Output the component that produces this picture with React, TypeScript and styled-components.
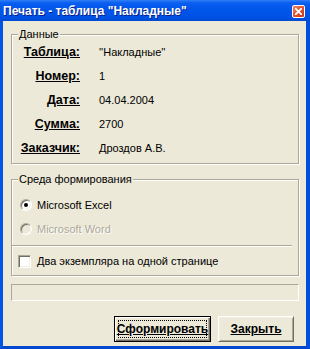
import styled, { createGlobalStyle } from "styled-components";

const GlobalStyle = createGlobalStyle`
    html, body {
        margin: 0;
        padding: 0;
        background: #ece9d8;
    }
    body {
        font-family: "Liberation Sans", Arial, sans-serif;
        font-size: 11px;
        color: #000;
    }
`;

const rows = [
    { label: "Таблица:", value: "''Накладные''" },
    { label: "Номер:", value: "1" },
    { label: "Дата:", value: "04.04.2004" },
    { label: "Сумма:", value: "2700" },
    { label: "Заказчик:", value: "Дроздов А.В." },
];

function CloseIcon() {
    return (
        <svg width="7" height="7" viewBox="0 0 7 7">
            <path d="M0.5 0.5 L6.5 6.5 M6.5 0.5 L0.5 6.5" stroke="#fff" strokeWidth="1.8" strokeLinecap="square" />
        </svg>
    );
}

export default function App() {
    return (
        <>
            <GlobalStyle />
            <Window>
                <TitleBar>
                    <Title>Печать - таблица "Накладные"</Title>
                    <CloseButton>
                        <CloseIcon />
                    </CloseButton>
                </TitleBar>
                <Body>
                    <Group $padTop={5} $padBottom={3}>
                        <Legend>Данные</Legend>
                        <InfoGrid>
                            {rows.map((r) => (
                                <InfoRow key={r.label}>
                                    <Label>{r.label}</Label>
                                    <Value>{r.value}</Value>
                                </InfoRow>
                            ))}
                        </InfoGrid>
                    </Group>

                    <Group $padTop={13} $padBottom={2} $gap={15}>
                        <Legend>Среда формирования</Legend>
                        <OptionRow $pad={8}>
                            <Radio $checked />
                            <OptionText>Microsoft Excel</OptionText>
                        </OptionRow>
                        <OptionRow $pad={8}>
                            <Radio $disabled />
                            <OptionText $disabled>Microsoft Word</OptionText>
                        </OptionRow>
                        <Separator />
                        <OptionRow $pad={6}>
                            <Checkbox />
                            <OptionText>Два экземпляра на одной странице</OptionText>
                        </OptionRow>
                    </Group>

                    <StatusField />

                    <Buttons>
                        <Button $default>Сформировать</Button>
                        <Button>Закрыть</Button>
                    </Buttons>
                </Body>
            </Window>
        </>
    );
}

const Window = styled.div`
    width: 310px;
    height: 349px;
    display: flex;
    flex-direction: column;
    box-sizing: border-box;
    background: #0054e3;
`;

const TitleBar = styled.div`
    height: 21px;
    flex: none;
    display: flex;
    align-items: center;
    justify-content: space-between;
    padding: 1px 5px 0 3px;
    box-sizing: border-box;
    background: linear-gradient(#2f7df5 0px, #0a5ef0 3px, #0055ea 10px, #0052e4 18px, #0048d0 21px);
`;

const Title = styled.span`
    color: #fff;
    font-family: "Liberation Sans", Arial, sans-serif;
    font-weight: bold;
    font-size: 12px;
    text-shadow: 1px 1px #0a1f8c;
    white-space: nowrap;
`;

const CloseButton = styled.div`
    width: 13px;
    height: 13px;
    box-sizing: border-box;
    border: 1px solid #fff;
    border-radius: 2px;
    background: linear-gradient(135deg, #f08a6c, #e0502e 50%, #c63a1a);
    display: flex;
    align-items: center;
    justify-content: center;
`;

const Body = styled.div`
    flex: 1;
    display: flex;
    flex-direction: column;
    background: #ece9d8;
    border-left: 3px solid #0055e5;
    border-right: 4px solid #0050dc;
    border-bottom: 3px solid #0048cf;
    padding: 13px 7px 3px 8px;
`;

const Group = styled.div<{ $padTop: number; $padBottom: number; $gap?: number }>`
    position: relative;
    border: 1px solid #aca899;
    box-shadow: inset 1px 1px #fff, 1px 1px #fff;
    padding: ${(p) => p.$padTop}px 0 ${(p) => p.$padBottom}px 0;
    margin-top: ${(p) => p.$gap ?? 0}px;
`;

const Legend = styled.span`
    position: absolute;
    top: -7px;
    left: 6px;
    padding: 0 1px;
    line-height: 13px;
    background: #ece9d8;
`;

const InfoGrid = styled.div`
    display: flex;
    flex-direction: column;
`;

const InfoRow = styled.div`
    height: 24px;
    display: grid;
    grid-template-columns: 68px 1fr;
    column-gap: 19px;
    align-items: center;
`;

const Label = styled.span`
    text-align: right;
    font-weight: bold;
    font-size: 12.5px;
    text-decoration: underline;
    white-space: nowrap;
`;

const Value = styled.span`
    font-size: 11px;
`;

const OptionRow = styled.div<{ $pad: number }>`
    height: 24px;
    display: flex;
    align-items: center;
    padding-left: ${(p) => p.$pad}px;
`;

const Radio = styled.span<{ $checked?: boolean; $disabled?: boolean }>`
    width: 12px;
    height: 12px;
    box-sizing: border-box;
    border-radius: 50%;
    border: 1px solid;
    border-color: #aca899 #fff #fff #aca899;
    box-shadow: inset 1px 1px #716f64, inset -1px -1px #f1efe2;
    background: ${(p) => (p.$disabled ? "#ece9d8" : "#fff")};
    display: flex;
    align-items: center;
    justify-content: center;
    margin-right: 5px;
    &::after {
        content: "";
        width: 4px;
        height: 4px;
        border-radius: 50%;
        background: ${(p) => (p.$checked ? "#000" : "transparent")};
    }
`;

const Checkbox = styled.span`
    width: 13px;
    height: 13px;
    box-sizing: border-box;
    border: 1px solid;
    border-color: #aca899 #fff #fff #aca899;
    box-shadow: inset 1px 1px #716f64, inset -1px -1px #f1efe2;
    background: #fff;
    margin-right: 6px;
`;

const OptionText = styled.span<{ $disabled?: boolean }>`
    color: ${(p) => (p.$disabled ? "#aca899" : "#000")};
    text-shadow: ${(p) => (p.$disabled ? "1px 1px #fff" : "none")};
`;

const Separator = styled.div`
    height: 1px;
    margin: 4px 6px 3px 0;
    background: #aca899;
    box-shadow: 0 1px #fff;
`;

const StatusField = styled.div`
    height: 17px;
    box-sizing: border-box;
    margin-top: 8px;
    border: 1px solid;
    border-color: #aca899 #fff #fff #aca899;
`;

const Buttons = styled.div`
    margin-top: 15px;
    margin-right: 5px;
    display: flex;
    justify-content: flex-end;
    gap: 7px;
`;

const Button = styled.button<{ $default?: boolean }>`
    height: 26px;
    width: ${(p) => (p.$default ? 97 : 76)}px;
    box-sizing: border-box;
    padding: 0;
    font-family: "Liberation Sans", Arial, sans-serif;
    font-weight: bold;
    font-size: 12px;
    text-decoration: underline;
    color: #000;
    background: #ece9d8;
    border: 1px solid;
    border-color: ${(p) => (p.$default ? "#000" : "#fff #716f64 #716f64 #fff")};
    box-shadow: ${(p) =>
        p.$default
            ? "inset 1px 1px #fff, inset -1px -1px #716f64, inset -2px -2px #aca899"
            : "inset 1px 1px #f1efe2, inset -1px -1px #aca899"};
    outline: ${(p) => (p.$default ? "1px dotted #000" : "none")};
    outline-offset: -5px;
`;
